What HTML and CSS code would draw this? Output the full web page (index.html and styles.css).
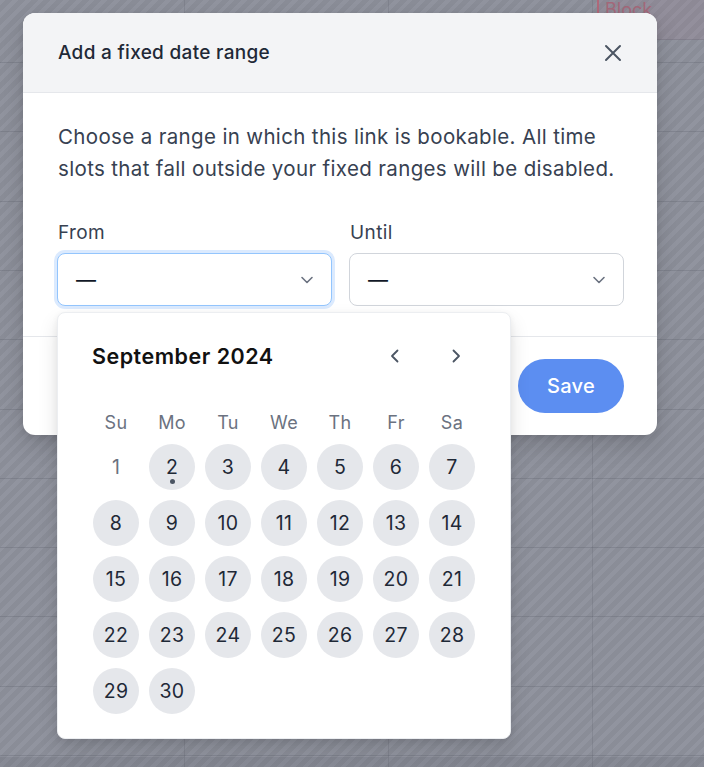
FILE: index.html
```html
<!DOCTYPE html>
<html lang="en">
<head>
<meta charset="utf-8">
<title>Add a fixed date range</title>
<link rel="stylesheet" href="styles.css">
</head>
<body>
<div class="backdrop">
  <div class="event-chip"><span>Block</span></div>
</div>

<div class="modal" role="dialog" aria-labelledby="modal-title">
  <header class="modal-header">
    <h2 id="modal-title" class="modal-title">Add a fixed date range</h2>
    <button class="close-btn" aria-label="Close">
      <svg width="20" height="20" viewBox="0 0 20 20" fill="none" stroke="currentColor" stroke-width="2" stroke-linecap="round"><path d="M3 3l14 14M17 3L3 17"/></svg>
    </button>
  </header>

  <div class="modal-body">
    <p class="intro">Choose a range in which this link is bookable. All time slots that fall outside your fixed ranges will be disabled.</p>

    <div class="fields">
      <div class="field">
        <label class="field-label">From</label>
        <div class="select select-focus">
          <span class="select-value">—</span>
          <svg class="chevron" width="14" height="14" viewBox="0 0 14 14" fill="none" stroke="currentColor" stroke-width="1.6" stroke-linecap="round" stroke-linejoin="round"><path d="M2 4.5l5 5 5-5"/></svg>
        </div>

        <div class="datepicker">
          <div class="dp-header">
            <div class="dp-month">September 2024</div>
            <div class="dp-nav">
              <button class="dp-nav-btn" aria-label="Previous month">
                <svg width="16" height="16" viewBox="0 0 16 16" fill="none" stroke="currentColor" stroke-width="1.8" stroke-linecap="round" stroke-linejoin="round"><path d="M10.5 2.5L5 8l5.5 5.5"/></svg>
              </button>
              <button class="dp-nav-btn" aria-label="Next month">
                <svg width="16" height="16" viewBox="0 0 16 16" fill="none" stroke="currentColor" stroke-width="1.8" stroke-linecap="round" stroke-linejoin="round"><path d="M5.5 2.5L11 8l-5.5 5.5"/></svg>
              </button>
            </div>
          </div>
          <div class="dp-weekdays">
            <span>Su</span><span>Mo</span><span>Tu</span><span>We</span><span>Th</span><span>Fr</span><span>Sa</span>
          </div>
          <div class="dp-grid">
            <div class="dp-cell"><span class="day day-muted">1</span></div>
            <div class="dp-cell"><span class="day day-today">2</span></div>
            <div class="dp-cell"><span class="day">3</span></div>
            <div class="dp-cell"><span class="day">4</span></div>
            <div class="dp-cell"><span class="day">5</span></div>
            <div class="dp-cell"><span class="day">6</span></div>
            <div class="dp-cell"><span class="day">7</span></div>
            <div class="dp-cell"><span class="day">8</span></div>
            <div class="dp-cell"><span class="day">9</span></div>
            <div class="dp-cell"><span class="day">10</span></div>
            <div class="dp-cell"><span class="day">11</span></div>
            <div class="dp-cell"><span class="day">12</span></div>
            <div class="dp-cell"><span class="day">13</span></div>
            <div class="dp-cell"><span class="day">14</span></div>
            <div class="dp-cell"><span class="day">15</span></div>
            <div class="dp-cell"><span class="day">16</span></div>
            <div class="dp-cell"><span class="day">17</span></div>
            <div class="dp-cell"><span class="day">18</span></div>
            <div class="dp-cell"><span class="day">19</span></div>
            <div class="dp-cell"><span class="day">20</span></div>
            <div class="dp-cell"><span class="day">21</span></div>
            <div class="dp-cell"><span class="day">22</span></div>
            <div class="dp-cell"><span class="day">23</span></div>
            <div class="dp-cell"><span class="day">24</span></div>
            <div class="dp-cell"><span class="day">25</span></div>
            <div class="dp-cell"><span class="day">26</span></div>
            <div class="dp-cell"><span class="day">27</span></div>
            <div class="dp-cell"><span class="day">28</span></div>
            <div class="dp-cell"><span class="day">29</span></div>
            <div class="dp-cell"><span class="day">30</span></div>
          </div>
        </div>
      </div>

      <div class="field">
        <label class="field-label">Until</label>
        <div class="select">
          <span class="select-value">—</span>
          <svg class="chevron" width="14" height="14" viewBox="0 0 14 14" fill="none" stroke="currentColor" stroke-width="1.6" stroke-linecap="round" stroke-linejoin="round"><path d="M2 4.5l5 5 5-5"/></svg>
        </div>
      </div>
    </div>
  </div>

  <footer class="modal-footer">
    <button class="btn-save">Save</button>
  </footer>
</div>
</body>
</html>
```

FILE: styles.css
```css
* { box-sizing: border-box; }

html, body {
  margin: 0;
  padding: 0;
}

body {
  width: 704px;
  height: 767px;
  overflow: hidden;
  position: relative;
  font-family: Inter, "Noto Sans", "Liberation Sans", sans-serif;
  color: #1f2937;
}

button {
  font-family: inherit;
  border: 0;
  background: none;
  padding: 0;
  cursor: pointer;
}

/* Dimmed calendar behind the dialog */
.backdrop {
  position: absolute;
  inset: 0;
  background-color: #8d909b;
  background-image:
    linear-gradient(to bottom, transparent 0, transparent 757px, rgba(60, 64, 76, 0.12) 757px),
    repeating-linear-gradient(to bottom, transparent 0, transparent 62px, rgba(70, 74, 86, 0.2) 62px, rgba(70, 74, 86, 0.2) 63px, transparent 63px, transparent 69.3px),
    repeating-linear-gradient(to right, transparent 0, transparent 184px, rgba(70, 74, 86, 0.16) 184px, rgba(70, 74, 86, 0.16) 185px, transparent 185px, transparent 204px),
    repeating-linear-gradient(135deg, rgba(255, 255, 255, 0.04) 0, rgba(255, 255, 255, 0.04) 4px, rgba(0, 0, 0, 0.025) 4px, rgba(0, 0, 0, 0.025) 9px);
}

.event-chip {
  position: absolute;
  left: 597px;
  top: -4px;
  width: 110px;
  height: 44px;
  background: rgba(160, 120, 140, 0.16);
  border-left: 2px solid #b0697a;
  border-bottom: 1px solid rgba(70, 74, 86, 0.18);
  padding: 3px 0 0 6px;
  font-size: 18px;
  color: #a4687a;
}

/* Dialog */
.modal {
  position: absolute;
  left: 23px;
  top: 13px;
  width: 634px;
  height: 422px;
  background: #ffffff;
  border-radius: 12px;
  box-shadow: 0 10px 25px rgba(0, 0, 0, 0.15), 0 2px 6px rgba(0, 0, 0, 0.08);
  display: flex;
  flex-direction: column;
}

.modal-header {
  height: 80px;
  background: #f3f4f6;
  border-bottom: 1px solid #e5e7eb;
  border-radius: 12px 12px 0 0;
  display: flex;
  align-items: center;
  justify-content: space-between;
  padding: 0 30px 0 35px;
}

.modal-title {
  margin: 0;
  font-size: 19px;
  font-weight: 500;
  color: #1f2937;
  letter-spacing: 0.3px;
}

.close-btn {
  width: 28px;
  height: 28px;
  display: flex;
  align-items: center;
  justify-content: center;
  color: #4b5563;
}

.modal-body {
  padding: 28px 33px 30px 35px;
  border-bottom: 1px solid #e5e7eb;
}

.intro {
  margin: 0;
  font-size: 20.5px;
  line-height: 32px;
  color: #374151;
  letter-spacing: 0.35px;
}

.fields {
  margin-top: 36px;
  display: grid;
  grid-template-columns: 1fr 1fr;
  column-gap: 17px;
  margin-left: -1px;
}

.field {
  position: relative;
  display: flex;
  flex-direction: column;
  gap: 8px;
}

.field-label {
  font-size: 19px;
  line-height: 24px;
  color: #374151;
  padding-left: 1px;
  letter-spacing: 0.4px;
}

.select {
  height: 53px;
  border: 1px solid #d1d5db;
  border-radius: 8px;
  background: #fff;
  display: flex;
  align-items: center;
  justify-content: space-between;
  padding: 0 17px 0 18px;
}

.select-focus {
  border-color: #93c5fd;
  box-shadow: 0 0 0 3px #dbeafe;
}

.select-value {
  font-size: 20px;
  color: #111827;
}

.chevron {
  color: #6b7280;
}

.modal-footer {
  flex: 1;
  display: flex;
  justify-content: flex-end;
  align-items: center;
  padding: 0 33px;
}

.btn-save {
  width: 106px;
  height: 54px;
  border-radius: 27px;
  background: #5c8ef1;
  color: #ffffff;
  font-size: 20px;
  font-weight: 500;
  letter-spacing: 0.3px;
}

/* Date picker popover */
.datepicker {
  position: absolute;
  left: 0;
  top: 91px;
  width: 454px;
  background: #fff;
  border: 1px solid #eceef1;
  border-radius: 8px;
  box-shadow: 0 10px 20px rgba(0, 0, 0, 0.12), 0 2px 6px rgba(0, 0, 0, 0.06);
  padding: 23px 30px 19px 30px;
  z-index: 2;
}

.dp-header {
  height: 40px;
  display: flex;
  align-items: center;
  justify-content: space-between;
  padding: 0 8px 0 4px;
}

.dp-month {
  font-size: 21.5px;
  font-weight: 600;
  color: #111111;
  letter-spacing: 0.5px;
}

.dp-nav {
  display: flex;
  gap: 29px;
}

.dp-nav-btn {
  width: 32px;
  height: 32px;
  display: flex;
  align-items: center;
  justify-content: center;
  color: #4b5563;
}

.dp-weekdays {
  margin-top: 29px;
  height: 34px;
  display: grid;
  grid-template-columns: repeat(7, 56px);
  align-items: center;
  justify-items: center;
  font-size: 18px;
  color: #6b7280;
  letter-spacing: 0.3px;
}

.dp-grid {
  display: grid;
  grid-template-columns: repeat(7, 56px);
  grid-auto-rows: 56px;
}

.dp-cell {
  display: flex;
  align-items: center;
  justify-content: center;
}

.day {
  position: relative;
  width: 46px;
  height: 46px;
  border-radius: 50%;
  background: #e5e7eb;
  display: flex;
  align-items: center;
  justify-content: center;
  font-size: 19.5px;
  color: #1f2937;
  letter-spacing: 0.3px;
}

.day-muted {
  background: transparent;
  color: #6b7280;
}

.day-today::after {
  content: "";
  position: absolute;
  left: 50%;
  bottom: 6px;
  width: 5px;
  height: 5px;
  margin-left: -2.5px;
  border-radius: 50%;
  background: #4b5563;
}
```
